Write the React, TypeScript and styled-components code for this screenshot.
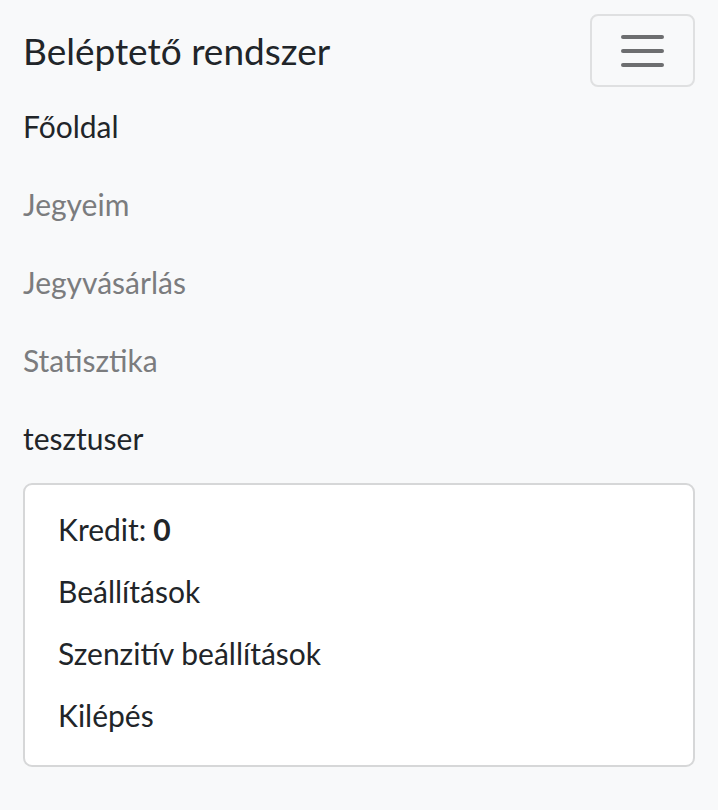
import { FC } from 'react';
import styled, { createGlobalStyle } from 'styled-components';

const GlobalStyle = createGlobalStyle`
  html, body {
    margin: 0;
    padding: 0;
    background: #f8f9fa;
    font-family: "Lato", "Noto Sans", sans-serif;
  }
`;

const NavbarStyled = styled.nav`
  background: #f8f9fa;
  box-shadow: 0 3px 6px rgba(0, 0, 0, 0.06);
  padding: 14px 23px 16px 23px;
`;

const TopRow = styled.div`
  display: flex;
  align-items: center;
  justify-content: space-between;
`;

const Brand = styled.a`
  font-size: 37px;
  color: #212529;
  text-decoration: none;
`;

const Toggler = styled.button`
  width: 105px;
  height: 73px;
  border: 2px solid #dfe0e1;
  border-radius: 8px;
  background: transparent;
  display: flex;
  align-items: center;
  justify-content: center;
  padding: 0;
`;

const NavList = styled.ul`
  list-style: none;
  margin: 0 0 6px;
  padding: 0;
  display: flex;
  flex-direction: column;
`;

const NavItem = styled.li<{ $active?: boolean }>`
  height: 78px;
  display: flex;
  align-items: center;
  font-size: 30px;
  color: ${(p) => (p.$active ? '#212529' : '#7b7c7e')};
`;

const DropdownMenu = styled.ul`
  list-style: none;
  margin: 0;
  padding: 13px 0 19px;
  background: #fff;
  border: 2px solid #d6d7d8;
  border-radius: 9px;
  display: flex;
  flex-direction: column;
`;

const DropdownItem = styled.li`
  height: 62px;
  display: flex;
  align-items: center;
  padding: 0 33px;
  font-size: 30px;
  color: #212529;

  & b {
    font-weight: 700;
    margin-left: 7px;
  }
`;

const TogglerIcon: FC = () => (
  <svg width="45" height="33" viewBox="0 0 45 33">
    <g stroke="#6d6e70" strokeWidth="4" strokeLinecap="round">
      <line x1="3" y1="3" x2="42" y2="3" />
      <line x1="3" y1="17" x2="42" y2="17" />
      <line x1="3" y1="31" x2="42" y2="31" />
    </g>
  </svg>
);

const App: FC = () => {
  return (
    <>
      <GlobalStyle />
      <NavbarStyled>
        <TopRow>
          <Brand href="#">Beléptető rendszer</Brand>
          <Toggler aria-label="menu">
            <TogglerIcon />
          </Toggler>
        </TopRow>
        <NavList>
          <NavItem $active>Főoldal</NavItem>
          <NavItem>Jegyeim</NavItem>
          <NavItem>Jegyvásárlás</NavItem>
          <NavItem>Statisztika</NavItem>
          <NavItem $active>tesztuser</NavItem>
        </NavList>
        <DropdownMenu>
          <DropdownItem>
            Kredit:<b>0</b>
          </DropdownItem>
          <DropdownItem>Beállítások</DropdownItem>
          <DropdownItem>Szenzitív beállítások</DropdownItem>
          <DropdownItem>Kilépés</DropdownItem>
        </DropdownMenu>
      </NavbarStyled>
    </>
  );
};

export default App;
